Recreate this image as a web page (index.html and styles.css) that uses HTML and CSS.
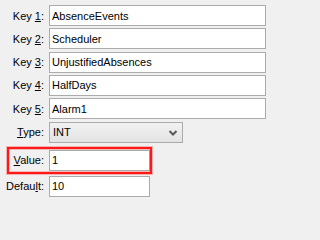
FILE: index.html
```html
<!DOCTYPE html>
<html>
<head>
<meta charset="utf-8">
<link rel="stylesheet" href="styles.css">
</head>
<body>
<form class="form">
  <div class="group">
    <div class="row"><label class="lbl">Key <u>1</u>:</label><input class="field" value="AbsenceEvents"></div>
    <div class="row"><label class="lbl">Key <u>2</u>:</label><input class="field" value="Scheduler"></div>
    <div class="row"><label class="lbl">Key <u>3</u>:</label><input class="field" value="UnjustifiedAbsences"></div>
    <div class="row"><label class="lbl">Key <u>4</u>:</label><input class="field" value="HalfDays"></div>
    <div class="row"><label class="lbl">Key <u>5</u>:</label><input class="field" value="Alarm1"></div>
    <div class="row"><label class="lbl"><u>T</u>ype:</label>
      <div class="select"><span class="select-text">INT</span>
        <svg class="chev" width="8" height="6" viewBox="0 0 8 6"><path d="M0.5 1 L4 4.5 L7.5 1" fill="none" stroke="#5a5a5a" stroke-width="2"/></svg>
      </div>
    </div>
  </div>
  <div class="row highlight"><label class="lbl"><u>V</u>alue:</label><input class="field short" value="1"></div>
  <div class="row last"><label class="lbl">Defau<u>l</u>t:</label><input class="field short" value="10"></div>
</form>
</body>
</html>
```
FILE: styles.css
```css
html, body {
  margin: 0;
  padding: 0;
  background: #f0f0f0;
  width: 271px;
  height: 202px;
  overflow: hidden;
}
.form {
  display: flex;
  flex-direction: column;
  padding: 5px 5px 0 0;
  font-family: "Liberation Sans", Arial, sans-serif;
  font-size: 11px;
  color: #000;
}
.group {
  display: flex;
  flex-direction: column;
  gap: 2.333px;
}
.row {
  display: grid;
  grid-template-columns: 44px 1fr;
  column-gap: 5px;
  align-items: center;
  height: 21px;
}
.lbl {
  text-align: right;
  white-space: nowrap;
}
.lbl u {
  text-decoration-thickness: 1px;
  text-underline-offset: 1px;
}
.field {
  box-sizing: border-box;
  height: 21px;
  width: 100%;
  margin: 0;
  border: 1px solid #ababab;
  background: #fff;
  padding: 0 2px;
  font: inherit;
  color: #000;
  outline: none;
}
.field.short {
  width: 101px;
}
.select {
  box-sizing: border-box;
  height: 21px;
  width: 134px;
  border: 1px solid #acacac;
  background: linear-gradient(#f2f2f2, #e3e3e3);
  display: flex;
  align-items: center;
  justify-content: space-between;
  padding: 0 5px 0 3px;
}
.chev {
  display: block;
  margin-top: 1px;
}
.highlight {
  position: relative;
  margin-top: 7.333px;
}
.highlight::after {
  content: "";
  position: absolute;
  left: 7px;
  top: -3px;
  bottom: -3px;
  width: 145px;
  box-sizing: border-box;
  border: 2px solid #ff1a1a;
  box-shadow: 0 0 0 1px rgba(255, 60, 60, 0.35), inset 0 0 0 1px rgba(255, 60, 60, 0.3);
  pointer-events: none;
}
.last {
  margin-top: 5px;
}
```
